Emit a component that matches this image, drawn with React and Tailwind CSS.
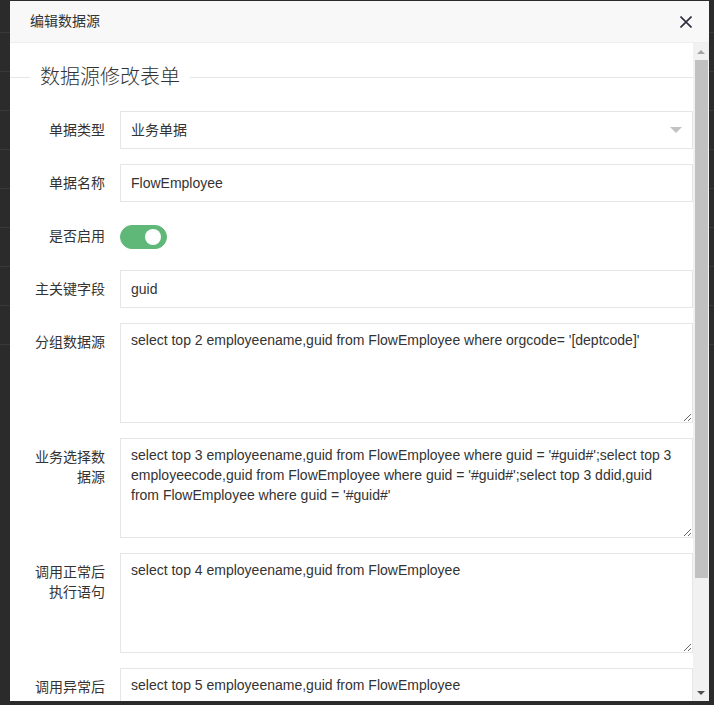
import React from "react";

const font = { fontFamily: '"Liberation Sans", "Noto Sans CJK SC", sans-serif' };

function Label({ children }) {
  return (
    <label className="w-[110px] shrink-0 px-[15px] py-[9px] text-right text-[14px] leading-[20px] text-[#333]">
      {children}
    </label>
  );
}

function Item({ label, children }) {
  return (
    <div className="flex mb-[15px]">
      <Label>{label}</Label>
      <div className="flex-1 min-h-[36px]">{children}</div>
    </div>
  );
}

function Input({ value }) {
  return (
    <div className="h-[38px] border border-[#e6e6e6] bg-white px-[10px] text-[14px] leading-[36px] text-[#333]">
      {value}
    </div>
  );
}

function Area({ value }) {
  return (
    <textarea
      readOnly
      defaultValue={value}
      className="block w-full h-[100px] min-h-[100px] border border-[#e6e6e6] bg-white px-[10px] py-[6px] text-[14px] leading-[20px] text-[#333] outline-none resize-y overflow-hidden"
      style={font}
    />
  );
}

export default function App() {
  const bgRows = Array.from({ length: 9 });
  return (
    <div className="relative w-[714px] h-[705px] overflow-hidden bg-[#2b2b2b]" style={font}>
      <div className="pt-[32px] flex flex-col">
        {bgRows.map((_, i) => (
          <div key={i} className="h-[39px] border-t border-[#393939]" />
        ))}
      </div>

      <div className="absolute left-[10px] top-[1px] w-[699px] h-[700px] bg-white flex flex-col">
        <div className="h-[42px] shrink-0 bg-[#F8F8F8] border-b border-[#eeeeee] flex items-center justify-between pl-[20px] pr-[17px]">
          <span className="text-[14px] text-[#333]">编辑数据源</span>
          <svg width="12" height="12" viewBox="0 0 12 12">
            <path d="M0.5 0.5 L11.5 11.5 M11.5 0.5 L0.5 11.5" stroke="#2E2D3C" strokeWidth="1.6" />
          </svg>
        </div>
        <div className="flex flex-1 min-h-0">
          <div className="flex-1 overflow-hidden">
            <div className="mt-[20px] mb-[20px] h-[28px] flex items-center">
              <div className="w-[20px] h-px bg-[#e6e6e6]" />
              <span className="px-[10px] text-[20px] leading-[28px] font-light text-[#333]">数据源修改表单</span>
              <div className="flex-1 h-px bg-[#e6e6e6]" />
            </div>

            <Item label="单据类型">
              <div className="h-[38px] border border-[#e6e6e6] bg-white pl-[10px] pr-[10px] flex items-center justify-between text-[14px] text-[#333]">
                <span>业务单据</span>
                <span className="w-0 h-0 border-l-[6px] border-r-[6px] border-t-[6px] border-l-transparent border-r-transparent border-t-[#c2c2c2]" />
              </div>
            </Item>
            <Item label="单据名称">
              <Input value="FlowEmployee" />
            </Item>
            <Item label="是否启用">
              <div className="mt-[8px] w-[47px] h-[24px] rounded-[20px] border border-[#5FB878] bg-[#5FB878] flex items-center justify-end pr-[5px]">
                <div className="w-[16px] h-[16px] rounded-full bg-white" />
              </div>
            </Item>
            <Item label="主关键字段">
              <Input value="guid" />
            </Item>
            <Item label="分组数据源">
              <Area value="select top 2 employeename,guid from FlowEmployee where orgcode= '[deptcode]'" />
            </Item>
            <Item label="业务选择数据源">
              <Area value="select top 3 employeename,guid from FlowEmployee where guid = '#guid#';select top 3 employeecode,guid from FlowEmployee where guid = '#guid#';select top 3 ddid,guid from FlowEmployee where guid = '#guid#'" />
            </Item>
            <Item label="调用正常后执行语句">
              <Area value="select top 4 employeename,guid from FlowEmployee" />
            </Item>
            <Item label="调用异常后">
              <Area value="select top 5 employeename,guid from FlowEmployee" />
            </Item>
          </div>

          <div className="w-[16px] shrink-0 bg-[#f1f1f1] flex flex-col">
            <div className="h-[17px] flex items-center justify-center">
              <span className="w-0 h-0 border-l-[4px] border-r-[4px] border-b-[4px] border-l-transparent border-r-transparent border-b-[#a3a3a3]" />
            </div>
            <div className="h-[518px] ml-[2px] mr-px bg-[#c1c1c1]" />
            <div className="flex-1" />
            <div className="h-[17px] flex items-center justify-center">
              <span className="w-0 h-0 border-l-[4px] border-r-[4px] border-t-[4px] border-l-transparent border-r-transparent border-t-[#505050]" />
            </div>
          </div>
        </div>
      </div>
    </div>
  );
}
